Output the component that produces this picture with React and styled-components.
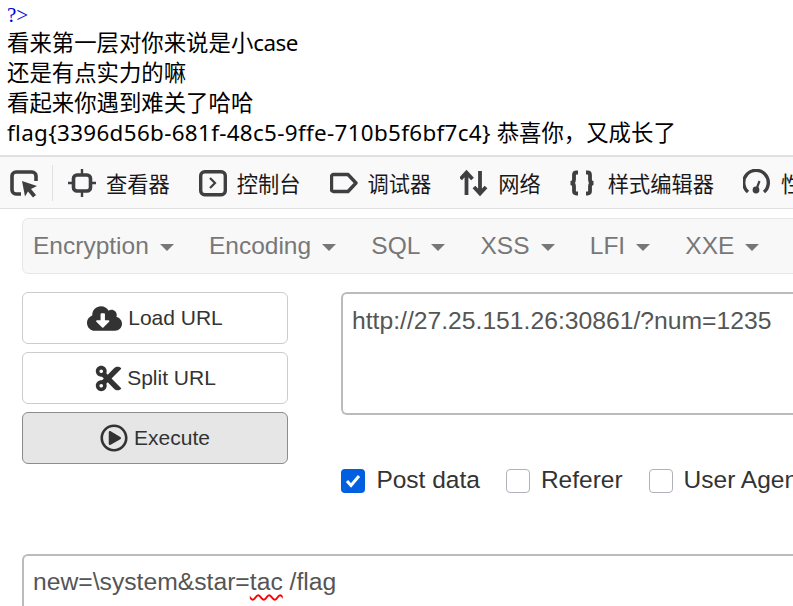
import React from "react";
import styled, { createGlobalStyle } from "styled-components";
import { FaCloudDownloadAlt, FaCut, FaRegPlayCircle } from "react-icons/fa";

const Global = createGlobalStyle`
  html, body { margin: 0; padding: 0; background: #fff; overflow: hidden; }
  body { width: 793px; height: 606px; }
`;
const Page = styled.div`width: 793px; height: 606px; overflow: hidden; display: flex; flex-direction: column;`;
const Output = styled.div`
  height: 155px; padding: 0 0 0 7px; box-sizing: border-box;
  font-family: "Noto Sans", "Noto Sans CJK SC", sans-serif; font-size: 22.4px; line-height: 30px; color: #000;
  white-space: nowrap;
`;
const Line = styled.div`height: 30px;`;
const PhpEnd = styled(Line)`color: #0000dd; font-family: "Liberation Serif", serif; font-size: 21px; height: 28px;`;
const Latin = styled.span`letter-spacing: ${p => p.$track};`;
const DevBar = styled.div`
  height: 54px; box-sizing: border-box; flex: none; display: flex; align-items: center; background: #f9f9fa;
  border-top: 2px solid #e0e0e2; border-bottom: 1px solid #e0e0e2; padding-left: 10px; white-space: nowrap;
`;
const Picker = styled.svg`width: 28px; height: 28px; flex: none; margin-top: 2px;`;
const Sep = styled.div`width: 1px; height: 36px; background: #e0e0e2; margin: 0 15px 0 14px; flex: none;`;
const Tab = styled.div`display: flex; align-items: center; gap: 10px; margin-right: 29px; flex: none;`;
const TabIcon = styled.svg`width: 28px; height: 28px; flex: none;`;
const TabLabel = styled.span`font-family: "Noto Sans CJK SC", sans-serif; font-size: 21.25px; color: #18181a;`;
const Main = styled.div`flex: 1; padding: 9px 0 0 22px; display: flex; flex-direction: column; min-height: 0; font-family: "Liberation Sans", Arial, sans-serif;`;
const Navbar = styled.div`
  height: 56px; width: 790px; flex: none; box-sizing: border-box; background: #f8f8f8; border: 1px solid #e7e7e7;
  border-radius: 6px; display: flex; align-items: center; padding-left: 10px; gap: 35.2px;
`;
const MenuItem = styled.div`display: flex; align-items: center; gap: 11px; color: #777; font-size: 24.5px; flex: none;`;
const Caret = styled.span`width: 0; height: 0; border-left: 7px solid transparent; border-right: 7px solid transparent; border-top: 7px solid #777; margin-top: 3px;`;
const Work = styled.div`display: flex; margin-top: 18px; flex: none;`;
const Buttons = styled.div`display: flex; flex-direction: column; gap: 8px; width: 266px; flex: none; margin-right: 53px;`;
const Btn = styled.button`
  height: 52px; width: 266px; box-sizing: border-box; background: ${p => p.$active ? "#e6e6e6" : "#fff"};
  border: 1px solid ${p => p.$active ? "#8c8c8c" : "#ccc"}; border-radius: 6px; color: #333;
  font-family: "Liberation Sans", Arial, sans-serif; font-size: 21px; display: flex; align-items: center; justify-content: center; gap: ${p => p.$gap || "6px"}; padding: 0;
`;
const Right = styled.div`flex: none; width: 500px;`;
const UrlBox = styled.div`
  height: 123px; box-sizing: border-box; border: 2px solid #bbb; border-right: none; border-radius: 6px 0 0 6px;
  padding: 10px 9px; color: #555; font-size: 24.7px; line-height: 34px; white-space: nowrap;
`;
const Checks = styled.div`display: flex; align-items: center; margin: 50px 0 1px 0.4px; height: 30px; white-space: nowrap;`;
const Check = styled.div`display: flex; align-items: center; gap: 11px; margin-right: 26px; font-size: 24.5px; color: #333; flex: none;`;
const Box = styled.span`
  width: 24px; height: 24px; box-sizing: border-box; border-radius: 4px; flex: none; display: flex; align-items: center; justify-content: center; margin-top: 1px;
  background: ${p => p.$on ? "#0060df" : "#fff"}; border: ${p => p.$on ? "none" : "1px solid #b1b1b9"};
`;
const PostBox = styled.div`
  margin-top: 58px; width: 800px; height: 80px; box-sizing: border-box; border: 2px solid #bbb; border-right: none; border-radius: 6px 0 0 0;
  padding: 9px 9px; color: #555; font-size: 24.7px; line-height: 34px; white-space: nowrap; flex: none;
`;
const Spell = styled.span`text-decoration: underline wavy #f00 1.6px; text-underline-offset: 4px;`;

const G = "#3f3f42";
const tabs = [
  ["查看器", <g key="a" fill="none" stroke={G}><rect x="5.500" y="6" width="17" height="16" rx="3.500" strokeWidth="3.6"/><path d="M14 0v6M14 22v6M0 14h5M23 14h5" strokeWidth="2.4"/></g>],
  ["控制台", <g key="b" fill="none" stroke={G} strokeWidth="3.4"><rect x="1.700" y="2.700" width="24.600" height="23" rx="4"/><path d="M11 9l5 5-5 5" strokeWidth="2.2"/></g>],
  ["调试器", <path key="c" d="M3.500 5.500h14.500L26 14l-8 8.500H3.500a2 2 0 0 1-2-2v-13a2 2 0 0 1 2-2z" fill="none" stroke={G} strokeWidth="3.400" strokeLinejoin="round"/>],
  ["网络", <g key="d" fill="none" stroke={G} strokeWidth="3.8" transform="translate(-1 0)"><path d="M7.500 26V3.500M1.500 10l6-6.500 6 6.500M21 2v22.500M15 18l6 6.500 6-6.500"/></g>],
  ["样式编辑器", <g key="e" fill="none" stroke={G} strokeWidth="3.800" transform="translate(-2 0)"><path d="M10 3.500H8.500Q6 3.500 6 6v4.500q0 3.500-3.500 3.500Q6 14 6 17.500V22q0 2.500 2.500 2.500H10M18 3.500h1.500Q22 3.500 22 6v4.500q0 3.500 3.500 3.500-3.500 0-3.500 3.500V22q0 2.500-2.500 2.500H18"/></g>],
  ["性能", <g key="f" fill="none" stroke={G} strokeWidth="3.400" transform="translate(-1 0)"><path d="M6 23a12.300 12.300 0 1 1 16 0"/><circle cx="14" cy="21" r="3.400" fill={G} stroke="none"/><path d="M14.500 20l3-8" strokeWidth="2.200"/></g>],
];

export default function App() {
  return (
    <Page>
      <Global />
      <Output>
        <PhpEnd>?&gt;</PhpEnd>
        <Line>看来第一层对你来说是小<Latin $track="-0.5px">case</Latin></Line>
        <Line>还是有点实力的嘛</Line>
        <Line>看起来你遇到难关了哈哈</Line>
        <Line><Latin $track="0.34px">flag{"{"}3396d56b-681f-48c5-9ffe-710b5f6bf7c4{"}"}</Latin> 恭喜你，又成长了</Line>
      </Output>
      <DevBar>
        <Picker viewBox="0 0 28 28">
          <path d="M11 24H6a4 4 0 0 1-4-4V6a4 4 0 0 1 4-4h16a4 4 0 0 1 4 4v5" fill="none" stroke={G} strokeWidth="3.6"/>
          <path d="M12 11l15 5-6 3 5 6-3 2.500-5-6-3 5z" fill={G}/>
        </Picker>
        <Sep />
        {tabs.map(([label, icon]) => (
          <Tab key={label}>
            <TabIcon viewBox="0 0 28 28">{icon}</TabIcon>
            <TabLabel>{label}</TabLabel>
          </Tab>
        ))}
      </DevBar>
      <Main>
        <Navbar>
          {["Encryption", "Encoding", "SQL", "XSS", "LFI", "XXE"].map(m => (
            <MenuItem key={m}>{m}<Caret /></MenuItem>
          ))}
        </Navbar>
        <Work>
          <Buttons>
            <Btn><FaCloudDownloadAlt size={35} />Load URL</Btn>
            <Btn $gap="4px"><FaCut size={29} />Split URL</Btn>
            <Btn $active><FaRegPlayCircle size={28} />Execute</Btn>
          </Buttons>
          <Right>
            <UrlBox>http://27.25.151.26:30861/?num=1235</UrlBox>
            <Checks>
              <Check><Box $on>
                <svg width="16" height="14" viewBox="0 0 16 14"><path d="M2 7l4 4.500L14 2" fill="none" stroke="#fff" strokeWidth="3"/></svg>
              </Box>Post data</Check>
              <Check><Box />Referer</Check>
              <Check><Box />User Agent</Check>
            </Checks>
          </Right>
        </Work>
        <PostBox>new=\system&amp;star=<Spell>tac</Spell> /flag</PostBox>
      </Main>
    </Page>
  );
}
